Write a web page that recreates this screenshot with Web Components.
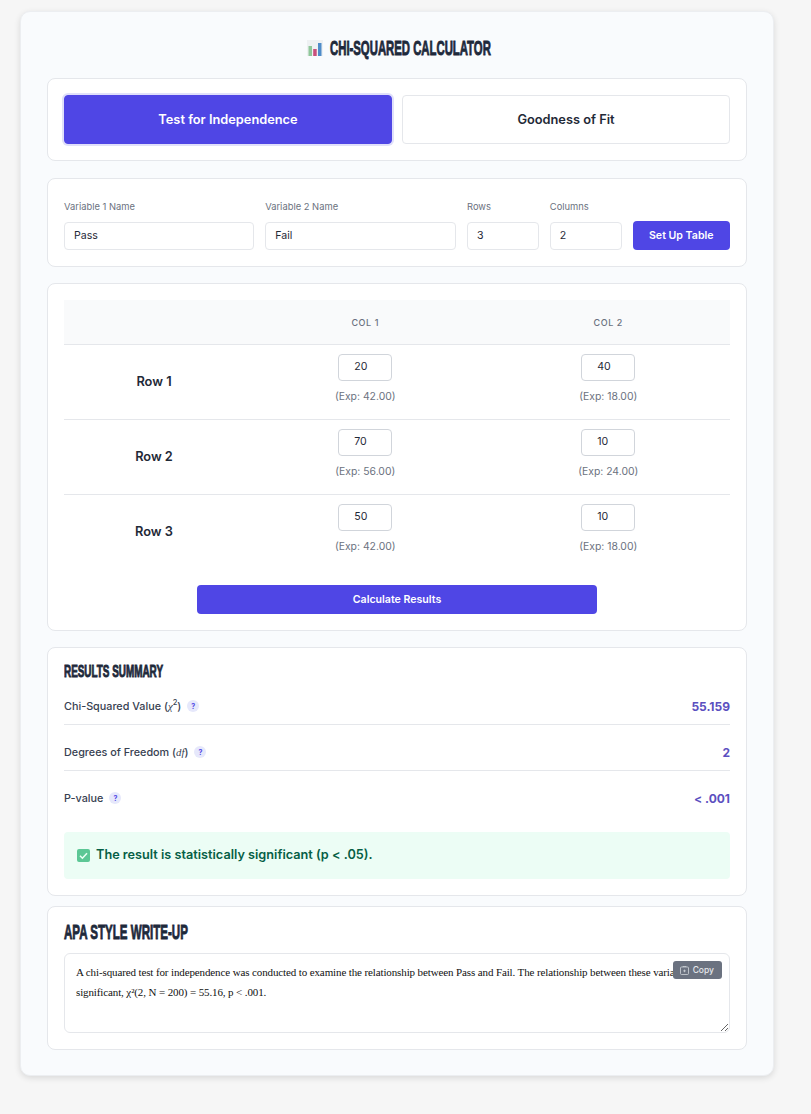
<!DOCTYPE html>
<html lang="en"><head><meta charset="utf-8"><title>Chi-Squared Calculator</title>
<style>
html,body{margin:0;padding:0;background:#f6f6f6;}
body{font-family:Inter,"Liberation Sans",sans-serif;color:#1f2937;}
</style></head><body>
<calc-app></calc-app>
<script>
function el(name, css, html, fn){
  customElements.define(name, class extends HTMLElement{
    constructor(){super();const s=this.attachShadow({mode:'open'});s.innerHTML='<style>'+css+'</style>'+html;}
    connectedCallback(){fn&&fn(this);}
  });
}
el('display-heading',`:host{display:block;line-height:1;color:#1e293b}
  .w{display:block;white-space:nowrap;font-family:"Liberation Sans Narrow","Liberation Sans",sans-serif;font-weight:700;-webkit-text-stroke:.9px currentColor;transform-origin:left center;}`,
  `<span class="w"><slot></slot></span>`,
  h=>{const w=h.shadowRoot.querySelector('.w');w.style.fontSize=(h.getAttribute('size')||16)+'px';w.style.transform='scaleX('+(h.getAttribute('sx')||.7)+')';});
el('panel-card',`:host{display:block;box-sizing:border-box;background:#fff;border:1px solid #e5e7eb;border-radius:8px;padding:16px}`,`<slot></slot>`);
el('mode-btn',`:host{display:flex;align-items:center;justify-content:center;box-sizing:border-box;height:49px;padding-top:1px;border-radius:4px;border:1px solid #e5e7eb;background:#fff;color:#1f2937;font:600 12.8px/1 Inter,sans-serif;}
  :host([active]){background:#4f46e5;color:#fff;border-color:#4f46e5;box-shadow:0 0 0 2px #e0e0fa;}`,`<slot></slot>`);
el('text-box',`:host{display:flex;align-items:center;box-sizing:border-box;height:28px;padding:0 9px;background:#fff;border:1px solid #e5e7eb;border-radius:4px;font:400 10.6px/1 Inter,sans-serif;color:#1f2937;}`,`<slot></slot>`);
el('field-group',`:host{display:flex;flex-direction:column;gap:10px;min-width:0}
  label{font:400 9.4px/11px Inter,sans-serif;color:#6b7280;}`,`<label><slot name="label"></slot></label><slot></slot>`);
el('count-cell',`:host{display:flex;flex-direction:column;align-items:center;height:74px;box-sizing:border-box;padding-top:9px}
  .b{display:flex;align-items:center;box-sizing:border-box;width:54px;height:27px;padding-left:15px;border:1px solid #d1d5db;border-radius:4px;background:#fff;font:400 10.6px/1 Inter,sans-serif;color:#1f2937}
  .e{margin-top:9px;font:400 10.4px/14px Inter,sans-serif;color:#6b7280}`,
  `<div class="b"><slot></slot></div><div class="e"><slot name="exp"></slot></div>`);
el('row-head',`:host{display:flex;align-items:center;justify-content:center;height:74px;font:600 12.8px/1 Inter,sans-serif;color:#1f2937}`,`<slot></slot>`);
el('col-head',`:host{display:flex;align-items:center;justify-content:center;height:44px;background:#f9fafb;font:500 9px/1 Inter,sans-serif;letter-spacing:.6px;color:#6b7280}`,`<slot></slot>`);
el('contingency-table',`:host{display:grid;grid-template-columns:180px 242.5px 243.5px;}
  ::slotted(.line){grid-column:1/-1;height:1px;background:#e5e7eb}`,`<slot></slot>`);
el('hint-dot',`:host{display:inline-flex;align-items:center;justify-content:center;width:12px;height:12px;border-radius:50%;background:#e6e8fb;color:#4f46e5;font:700 7px/1 Inter,sans-serif;margin-left:6px;vertical-align:1px}`,`?`);
el('stat-row',`:host{display:flex;align-items:center;justify-content:space-between;height:46px;box-sizing:border-box;padding-top:10px;border-bottom:1px solid #e5e7eb;font:500 10.8px/1 Inter,sans-serif;color:#374151}
  :host([last]){border-bottom-color:transparent}
  .v{font:700 12px/1 Inter,sans-serif;color:#5b4fc0}`,
  `<div><slot></slot></div><div class="v"><slot name="value"></slot></div>`);
el('signif-banner',`:host{display:flex;align-items:center;gap:6px;box-sizing:border-box;height:47px;padding:0 13px;background:#ecfdf5;border-radius:4px;color:#065f46;font:600 12.7px/1 Inter,sans-serif}`,
  `<svg width="13" height="13" viewBox="0 0 13 13"><rect width="13" height="13" rx="2" fill="#5cc795"/><path d="M3 6.8l2.4 2.4L10 4.2" fill="none" stroke="#eafff4" stroke-width="1.6"/></svg><span><slot></slot></span>`);
el('apa-box',`:host{display:block;position:relative}
  textarea{display:block;box-sizing:border-box;width:100%;height:80px;padding:8px 11px;border:1px solid #e5e7eb;border-radius:6px;background:#fff;font:400 11px/20px "Liberation Serif",serif;letter-spacing:-.12px;color:#111;resize:vertical;outline:0;margin:0;overflow:hidden}
  .c{position:absolute;top:8px;right:8px;display:flex;align-items:center;gap:4px;height:18px;padding:0 8px 0 7px;background:#6b7280;border-radius:3px;color:#e5e7eb;font:500 8.5px/1 Inter,sans-serif}`,
  `<textarea>A chi-squared test for independence was conducted to examine the relationship between Pass and Fail. The relationship between these variables was significant, χ²(2, N = 200) = 55.16, p &lt; .001.</textarea><div class="c"><svg width="9" height="9" viewBox="0 0 9 9" fill="none" stroke="#d1d5db" stroke-width=".8"><rect x=".5" y="1" width="8" height="7.5" rx="1"/><path d="M3 1V.4h3V1M4.5 3.6v2.6M3.2 4.9h2.6"/></svg><span>Copy</span></div>`);
el('action-btn',`:host{display:flex;align-items:center;justify-content:center;box-sizing:border-box;height:29px;padding-top:1px;background:#4f46e5;border-radius:4px;color:#fff;font:600 10.6px/1 Inter,sans-serif}`,`<slot></slot>`);

el('calc-app',`:host{display:block;padding:11px 37px 38px 20px}
  .shell{box-sizing:border-box;width:754px;height:1065px;padding:26px 26px 0;background:#f9fbfd;border:1px solid #eceef1;border-radius:10px;box-shadow:0 2px 6px rgba(0,0,0,.12);display:flex;flex-direction:column}
  .title{display:flex;align-items:center;justify-content:center;gap:7px;height:20px;margin-bottom:20px;padding-left:3px}
  .title display-heading{width:160px;margin-top:-2px}
  .modes{display:grid;grid-template-columns:1fr 1fr;gap:10px}
  .setupwrap{margin-top:17px;padding-top:22px}
  .setup{display:grid;grid-template-columns:190.4px 191px 72px 72px 1fr;column-gap:10.8px;align-items:end}
  .mt16{margin-top:16px}.mt10{margin-top:10px}
  .calc{display:flex;justify-content:center;margin-top:16px}.calc action-btn{width:400px}
  .resT{display:flow-root;height:15px;width:200px}
  .resT display-heading{margin-top:-1px}
  .ban{margin-top:15px}
  .apaT{display:flow-root;height:16px;width:200px;margin-bottom:14px}
  .apaT display-heading{margin-top:-2px}
  svg.chart{display:block;flex:none}
  sup{font-size:7.5px;line-height:0}
  em{font-family:"Liberation Serif",serif}
`,`<div class="shell">
  <div class="title"><svg class="chart" width="16" height="16" viewBox="0 0 16 16"><rect width="16" height="16" fill="#eef1f3"/><rect x="1.5" y="6" width="3.5" height="10" fill="#8fc79a"/><rect x="6.2" y="9" width="3.5" height="7" fill="#c94f7c"/><rect x="11" y="3" width="3.5" height="13" fill="#4f8cc9"/></svg><display-heading size="21" sx=".54">CHI-SQUARED CALCULATOR</display-heading></div>
  <panel-card><div class="modes"><mode-btn active>Test for Independence</mode-btn><mode-btn>Goodness of Fit</mode-btn></div></panel-card>
  <panel-card class="setupwrap"><div class="setup">
    <field-group><span slot="label">Variable 1 Name</span><text-box>Pass</text-box></field-group>
    <field-group><span slot="label">Variable 2 Name</span><text-box>Fail</text-box></field-group>
    <field-group><span slot="label">Rows</span><text-box>3</text-box></field-group>
    <field-group><span slot="label">Columns</span><text-box>2</text-box></field-group>
    <action-btn>Set Up Table</action-btn>
  </div></panel-card>
  <panel-card class="mt16">
    <contingency-table>
      <col-head></col-head><col-head>COL 1</col-head><col-head>COL 2</col-head><div class="line"></div>
      <row-head>Row 1</row-head><count-cell>20<span slot="exp">(Exp: 42.00)</span></count-cell><count-cell>40<span slot="exp">(Exp: 18.00)</span></count-cell><div class="line"></div>
      <row-head>Row 2</row-head><count-cell>70<span slot="exp">(Exp: 56.00)</span></count-cell><count-cell>10<span slot="exp">(Exp: 24.00)</span></count-cell><div class="line"></div>
      <row-head>Row 3</row-head><count-cell>50<span slot="exp">(Exp: 42.00)</span></count-cell><count-cell>10<span slot="exp">(Exp: 18.00)</span></count-cell>
    </contingency-table>
    <div class="calc"><action-btn>Calculate Results</action-btn></div>
  </panel-card>
  <panel-card class="mt16">
    <div class="resT"><display-heading size="16.5" sx=".6">RESULTS SUMMARY</display-heading></div>
    <stat-row>Chi-Squared Value (<em>χ</em><sup>2</sup>)<hint-dot></hint-dot><span slot="value">55.159</span></stat-row>
    <stat-row>Degrees of Freedom (<em>df</em>)<hint-dot></hint-dot><span slot="value">2</span></stat-row>
    <stat-row last>P-value<hint-dot></hint-dot><span slot="value">&lt; .001</span></stat-row>
    <div class="ban"><signif-banner>The result is statistically significant (p &lt; .05).</signif-banner></div>
  </panel-card>
  <panel-card class="mt10">
    <div class="apaT"><display-heading size="21" sx=".55">APA STYLE WRITE-UP</display-heading></div>
    <apa-box></apa-box>
  </panel-card>
</div>`);
</script>
</body></html>
